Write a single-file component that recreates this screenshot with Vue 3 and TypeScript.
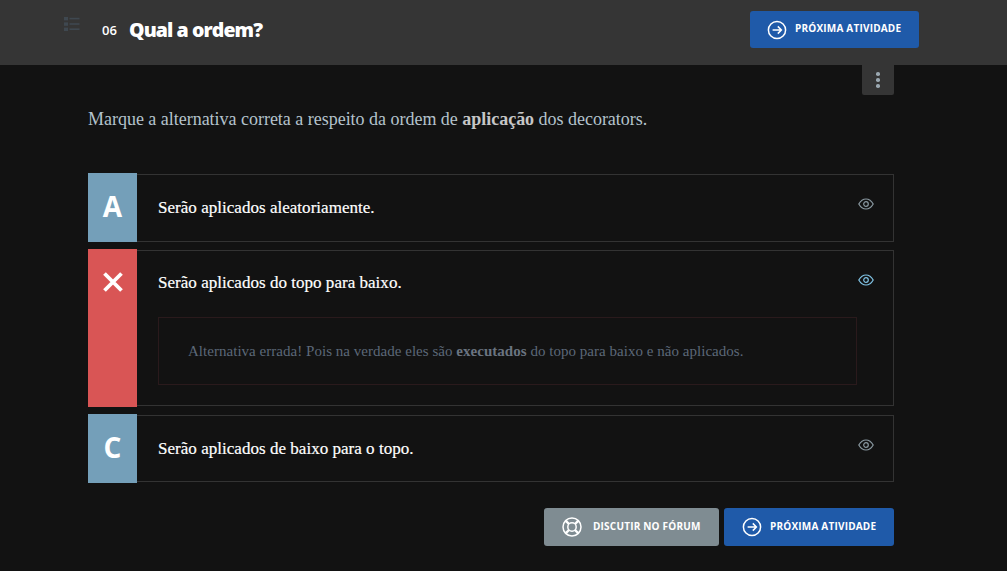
<script setup lang="ts">
interface Alt { mark: string; text: string; wrong?: boolean; note?: boolean }
const alts: Alt[] = [
  { mark: 'A', text: 'Serão aplicados aleatoriamente.' },
  { mark: '', text: 'Serão aplicados do topo para baixo.', wrong: true, note: true },
  { mark: 'C', text: 'Serão aplicados de baixo para o topo.' },
]
</script>

<template>
  <div class="page">
    <header class="top">
      <div class="heading">
        <svg class="list" width="16" height="16" viewBox="0 0 16 16" fill="#3f4850">
          <rect x="0" y="1" width="4" height="3.4" />
          <rect x="0" y="6.4" width="4" height="3.4" />
          <rect x="0" y="11.6" width="4" height="3.4" />
          <rect x="5.5" y="1.8" width="10" height="1.6" />
          <rect x="5.5" y="7.2" width="10" height="1.6" />
          <rect x="5.5" y="12.4" width="10" height="1.6" />
        </svg>
        <span class="num">06</span>
        <h1>Qual a ordem?</h1>
      </div>
      <a class="btn blue top-btn">
        <svg width="20" height="20" viewBox="0 0 20 20" fill="none" stroke="#fff" stroke-width="1.5">
          <circle cx="10" cy="10" r="8.6" />
          <path d="M5.6 10h8.6M10.8 6.4l3.6 3.6-3.6 3.6" />
        </svg>
        <span>PRÓXIMA ATIVIDADE</span>
      </a>
    </header>

    <main class="main">
      <div class="menu-row">
        <button class="menu" aria-label="menu"><i></i><i></i><i></i></button>
      </div>
      <p class="question">
        Marque a alternativa correta a respeito da ordem de <b>aplicação</b> dos decorators.
      </p>

      <ul class="alts">
        <li v-for="a in alts" :key="a.text" class="alt" :class="{ wrong: a.wrong }">
          <div class="mark">
            <svg v-if="a.wrong" width="22" height="22" viewBox="0 0 22 22" stroke="#fff" stroke-width="3.8">
              <path d="M2.5 2.5l17 17M19.5 2.5l-17 17" />
            </svg>
            <span v-else>{{ a.mark }}</span>
          </div>
          <div class="body">
            <div class="line">
              <span class="text">{{ a.text }}</span>
              <svg class="eye" width="16" height="12" viewBox="0 0 16 12" fill="none" stroke="currentColor" stroke-width="1.2">
                <path d="M.8 6C2.6 2.8 5 1 8 1s5.4 1.8 7.2 5C13.4 9.2 11 11 8 11S2.6 9.2.8 6z" />
                <circle cx="8" cy="6" r="2.3" />
              </svg>
            </div>
            <div v-if="a.note" class="note">
              Alternativa errada! Pois na verdade eles são <b>executados</b> do topo para baixo e não aplicados.
            </div>
          </div>
        </li>
      </ul>

      <div class="actions">
        <a class="btn gray">
          <svg width="20" height="20" viewBox="0 0 20 20" fill="none" stroke="#fff" stroke-width="1.5">
            <circle cx="10" cy="10" r="9" />
            <circle cx="10" cy="10" r="4.2" />
            <path d="M3.8 3.8l3.2 3.2M16.2 3.8L13 7M3.8 16.2L7 13M16.2 16.2L13 13" stroke-width="2.4" />
          </svg>
          <span>DISCUTIR NO FÓRUM</span>
        </a>
        <a class="btn blue">
          <svg width="20" height="20" viewBox="0 0 20 20" fill="none" stroke="#fff" stroke-width="1.5">
            <circle cx="10" cy="10" r="8.6" />
            <path d="M5.6 10h8.6M10.8 6.4l3.6 3.6-3.6 3.6" />
          </svg>
          <span>PRÓXIMA ATIVIDADE</span>
        </a>
      </div>
    </main>
  </div>
</template>

<style scoped>
.page {
  width: 1007px;
  height: 571px;
  overflow: hidden;
  background: #121212;
  font-family: "Liberation Serif", "Times New Roman", serif;
}
.top {
  height: 65px;
  box-sizing: border-box;
  padding: 0 88px 0 64px;
  background: #353535;
  display: flex;
  align-items: center;
  justify-content: space-between;
}
.heading {
  display: flex;
  align-items: center;
  height: 100%;
  padding-bottom: 5px;
  box-sizing: border-box;
}
.list {
  align-self: flex-start;
  margin-top: 16px;
  margin-right: 22px;
}
.num {
  font: 600 13px "Open Sans", sans-serif;
  color: #fff;
  width: 27px;
}
h1 {
  margin: -2px 0 0;
  font: 800 19.5px "Open Sans", sans-serif;
  color: #fff;
  letter-spacing: -0.9px;
}
.btn {
  display: flex;
  align-items: center;
  box-sizing: border-box;
  height: 38px;
  border-radius: 3px;
  color: #fff;
  font: 700 10px "Open Sans", sans-serif;
  letter-spacing: 0.2px;
}
.btn svg { flex: none; }
.btn span { margin-top: -2px; }
.blue { background: #1f5aa9; width: 170px; padding-left: 18px; gap: 8px; }
.gray { background: #7f8c92; width: 175px; padding-left: 18px; gap: 11px; }
.top-btn { height: 37px; margin-top: -6px; width: 169px; gap: 8px; padding-left: 17px; }
.top-btn span { margin-top: -3px; }
.main { padding: 0 113px 0 88px; }
.menu-row { display: flex; justify-content: flex-end; }
.menu {
  width: 32px;
  height: 30px;
  padding: 0;
  border: 0;
  border-radius: 0 0 2px 2px;
  background: #353535;
  display: flex;
  flex-direction: column;
  align-items: center;
  justify-content: center;
  gap: 2.5px;
}
.menu i {
  width: 3.5px;
  height: 3.5px;
  border-radius: 50%;
  background: #9aa7b0;
}
.question {
  margin: 14px 0 0;
  font-size: 18px;
  letter-spacing: -0.02px;
  line-height: 20px;
  color: #b4c2cc;
}
.question b { color: #c6c6c6; }
.alts {
  list-style: none;
  margin: 44px 0 0;
  padding: 0;
  display: flex;
  flex-direction: column;
  gap: 7px;
}
.alt { display: flex; }
.mark {
  flex: none;
  width: 49px;
  min-height: 69px;
  background: #749fb9;
  color: #fff;
  display: flex;
  justify-content: center;
  padding-top: 15px;
  box-sizing: border-box;
  font: 700 28px/36px "Open Sans", sans-serif;
}
.wrong .mark { background: #d95555; padding-top: 22px; }
.body {
  flex: 1;
  margin: 1px 0 1px;
  border: 1px solid #333;
  border-left: 0;
  padding: 0 36px 20px 21px;
}
.alt:first-child .body { margin-bottom: 0; }
.body:not(:has(.note)) { padding-bottom: 0; }
.line {
  display: flex;
  justify-content: space-between;
  align-items: center;
  box-sizing: border-box;
  height: 66px;
  padding-bottom: 1px;
}
.wrong .line { padding-bottom: 2px; }
.alt:last-child .line { height: 65px; padding-bottom: 0; }
.text {
  color: #fff;
  font-size: 17px;
  letter-spacing: 0.03px;
  -webkit-text-stroke: 0.2px #fff;
}
.eye { color: #8a99a1; margin-right: -17px; margin-top: -7px; }
.wrong .eye { color: #81c4e6; }
.note {
  box-sizing: border-box;
  height: 68px;
  border: 1px solid #2a1a1c;
  padding: 0 29px;
  line-height: 66px;
  font-size: 15px;
  letter-spacing: 0.03px;
  color: #5c6878;
}
.note b { color: #6a7480; }
.actions {
  display: flex;
  justify-content: flex-end;
  gap: 5px;
  margin-top: 25px;
}
</style>
